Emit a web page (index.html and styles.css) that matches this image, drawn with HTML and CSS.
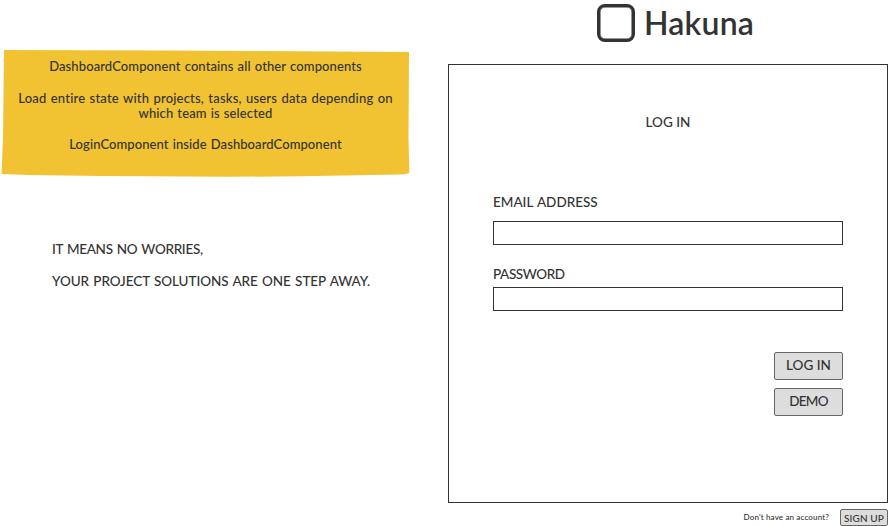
FILE: index.html
```html
<!DOCTYPE html>
<html lang="en">
<head>
<meta charset="utf-8">
<title>Hakuna</title>
<link rel="stylesheet" href="styles.css">
</head>
<body>
<div class="page">
  <section class="intro">
    <div class="note">
      <svg class="note-paper" viewBox="0 0 410 130" aria-hidden="true"><path d="M4 2 L160 2.5 L409 4 L408.500 90 L409.300 125 Q405 126.600 398 126.600 L300 128.300 L230 128.800 L100 128 L30 127 L1.500 126 L3 90Z"/></svg>
      <p><span class="n1">DashboardComponent contains all other components</span></p>
      <p><span class="n2">Load entire state with projects, tasks, users data depending on</span><br><span class="n3">which team is selected</span></p>
      <p><span class="n4">LoginComponent inside DashboardComponent</span></p>
    </div>
    <div class="tagline">
      <p class="t1">IT MEANS NO WORRIES,</p>
      <p class="t2">YOUR PROJECT SOLUTIONS ARE ONE STEP AWAY.</p>
    </div>
  </section>
  <main class="auth">
    <header class="brand"><span class="logo"></span><h1>Hakuna</h1></header>
    <form class="panel">
      <h2>LOG IN</h2>
      <label class="email" for="email">EMAIL ADDRESS</label>
      <input id="email" type="text">
      <label class="password" for="password">PASSWORD</label>
      <input id="password" type="password">
      <div class="actions">
        <button type="button">LOG IN</button>
        <button type="button" class="demo">DEMO</button>
      </div>
    </form>
    <footer><span class="ask">Don't have an account?</span><button type="button" class="signup">SIGN UP</button></footer>
  </main>
</div>
</body>
</html>
```

FILE: styles.css
```css
* { box-sizing: border-box; }
body, h1, h2, p { margin: 0; }
body {
  background: #fff;
  color: #333;
  font: 500 13.500px/16px Lato, "Open Sans", sans-serif;
  overflow: hidden;
}
.page { display: grid; grid-template-columns: 448px 440px; height: 526px; }
.intro { padding-top: 48px; }
.note {
  position: relative;
  width: 410px;
  height: 130px;
  padding: 11px 0 0 1px;
  text-align: center;
  white-space: nowrap;
  font-size: 13px;
  line-height: 15px;
}
.note p { position: relative; margin-bottom: 17px; }
.note p + p { margin-bottom: 16px; }
.note-paper { position: absolute; inset: 0; width: 410px; height: 130px; fill: #f1c232; }
.n1 { letter-spacing: 0.100px; word-spacing: 0.800px; }
.n2 { letter-spacing: 0.200px; word-spacing: 0.800px; }
.n3 { letter-spacing: 0.150px; word-spacing: 0.500px; }
.n4 { letter-spacing: 0.080px; word-spacing: 0.800px; }
.tagline { padding: 63px 0 0 52px; white-space: nowrap; }
.tagline p { margin-bottom: 16px; }
.t1 { letter-spacing: -0.300px; word-spacing: 1px; }
.t2 { letter-spacing: -0.070px; word-spacing: 1px; }
.auth { display: flex; flex-direction: column; }
.brand { display: flex; align-items: center; height: 64px; padding: 0 0 19px 149px; gap: 9px; }
.logo { width: 38px; height: 38px; border: 3px solid #333; border-radius: 8px; box-shadow: inset 0 0 0 0.500px #333; }
h1 { font: 600 32px/40px Lato, "Open Sans", sans-serif; letter-spacing: 0.200px; }
.panel {
  display: flex;
  flex-direction: column;
  height: 439px;
  padding: 49px 44px 0;
  border: 1px solid #333;
}
h2 { font-size: 13.500px; font-weight: 500; line-height: 16px; text-align: center; }
label { white-space: nowrap; align-self: flex-start; }
.email { margin: 64px 0 11px; word-spacing: 1px; }
.password { margin: 21px 0 5px; letter-spacing: -0.400px; }
input { width: 350px; height: 24px; border: 1px solid #333; padding: 0 5px; background: #fff; }
.actions { display: flex; flex-direction: column; align-items: flex-end; gap: 8px; margin-top: 41px; }
button {
  width: 69px;
  height: 28px;
  padding: 0 0 2px;
  border: 1px solid #666;
  border-radius: 2px;
  background: #ddd;
  color: #333;
  font: inherit;
  white-space: nowrap;
}
.demo { letter-spacing: -0.700px; }
footer { display: flex; justify-content: flex-end; align-items: center; gap: 11px; padding-top: 6px; }
.ask { padding-bottom: 2px; font-size: 8px; line-height: 14px; letter-spacing: 0.150px; white-space: nowrap; }
.signup { width: 48px; height: 17px; padding: 0; font-size: 10px; line-height: 14px; letter-spacing: 0.100px; }
```
